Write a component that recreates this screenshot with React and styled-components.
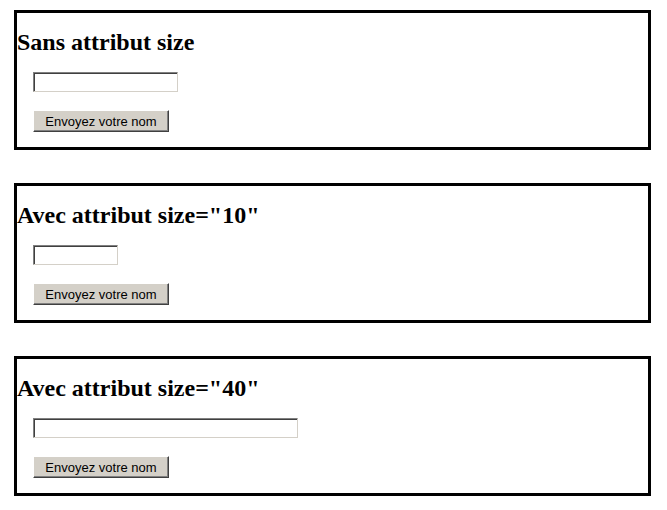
import React from 'react'
import styled, { createGlobalStyle } from 'styled-components'

const GlobalStyle = createGlobalStyle`
  html, body {
    margin: 0;
    padding: 0;
    background: #ffffff;
  }
`

const Page = styled.div`
  display: flex;
  flex-direction: column;
  gap: 33px;
  padding: 10px 16px 0 14px;
  width: 637px;
`

const Box = styled.form`
  display: flex;
  flex-direction: column;
  align-items: flex-start;
  margin: 0;
  height: 140px;
  box-sizing: border-box;
  border: 3px solid #000000;
  padding: 15px 0;
`

const Title = styled.h2`
  margin: 0 0 16px;
  font-family: 'Liberation Serif', 'Times New Roman', serif;
  font-size: 24px;
  font-weight: bold;
  line-height: 28px;
  color: #000000;
  white-space: nowrap;
`

const Field = styled.input`
  box-sizing: border-box;
  width: ${(p) => p.$width}px;
  height: 20px;
  margin: 0 0 0 16px;
  padding: 0 2px;
  background: #ffffff;
  border: 1px solid;
  border-color: #808080 #d4d0c8 #d4d0c8 #808080;
  box-shadow: inset 1px 1px 0 #404040;
  font-family: 'Liberation Sans', Arial, sans-serif;
  font-size: 13px;
  outline: none;
`

const Button = styled.button`
  box-sizing: border-box;
  width: 136px;
  height: 22px;
  margin: 18px 0 0 16px;
  padding: 0;
  background: #d4d0c8;
  border: 1px solid;
  border-color: #ffffff #404040 #404040 #ffffff;
  box-shadow: inset -1px -1px 0 #808080;
  font-family: 'Liberation Sans', Arial, sans-serif;
  font-size: 13px;
  color: #000000;
  cursor: pointer;
`

const sections = [
  { title: 'Sans attribut size', width: 145 },
  { title: 'Avec attribut size="10"', width: 85 },
  { title: 'Avec attribut size="40"', width: 265 },
]

const App = () => {
  return (
    <>
      <GlobalStyle />
      <Page>
        {sections.map((s) => (
          <Box key={s.title} onSubmit={(e) => e.preventDefault()}>
            <Title>{s.title}</Title>
            <Field type="text" $width={s.width} />
            <Button type="submit">Envoyez votre nom</Button>
          </Box>
        ))}
      </Page>
    </>
  )
}

export default App
